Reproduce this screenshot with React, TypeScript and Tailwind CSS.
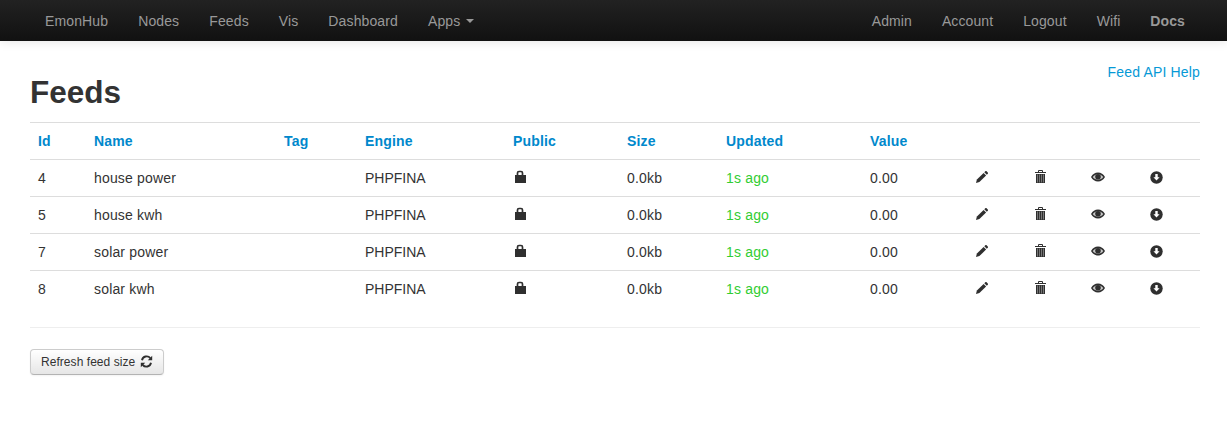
const leftNav = ['EmonHub', 'Nodes', 'Feeds', 'Vis', 'Dashboard'];
const rightNav = ['Admin', 'Account', 'Logout', 'Wifi'];
const headers = ['Id', 'Name', 'Tag', 'Engine', 'Public', 'Size', 'Updated', 'Value'];

const feeds = [
  { id: 4, name: 'house power' },
  { id: 5, name: 'house kwh' },
  { id: 7, name: 'solar power' },
  { id: 8, name: 'solar kwh' },
];

function LockIcon() {
  return (
    <svg width="14" height="14" viewBox="0 0 14 14" className="block">
      <path d="M4.500 5V3C4.500 2 5 1.500 6 1.500h2C9 1.500 9.500 2 9.500 3V5" fill="none" stroke="#2f2f2f" strokeWidth="1.700" />
      <rect x="2" y="5" width="11" height="8" fill="#2f2f2f" />
    </svg>
  );
}

function PencilIcon() {
  return (
    <svg width="14" height="14" viewBox="0 0 14 14" className="block">
      <path d="M1 13l.9-3.400 6.700-6.700 2.500 2.500-6.700 6.700z" fill="#2f2f2f" />
      <path d="M9.300 2.200l1-1c.4-.4.9-.4 1.300 0l1.200 1.200c.4.4.4.9 0 1.300l-1 1z" fill="#2f2f2f" />
    </svg>
  );
}

function TrashIcon() {
  return (
    <svg width="12" height="14" viewBox="0 0 12 14" className="block">
      <path d="M3.500 2V0.500h4V2" fill="none" stroke="#2f2f2f" strokeWidth="1" />
      <rect x="0" y="2" width="11" height="1" fill="#2f2f2f" />
      <path d="M1 4h9v9H1z" fill="#2f2f2f" />
      <path d="M2.500 4.500v8M4.500 4.500v8M6.500 4.500v8M8.500 4.500v8" stroke="#8a8a8a" strokeWidth="0.800" />
    </svg>
  );
}

function EyeIcon() {
  return (
    <svg width="14" height="10" viewBox="0 0 14 10" className="block">
      <path d="M0 5c1.600-2.900 4-4.500 7-4.500S12.400 2.100 14 5c-1.600 2.900-4 4.500-7 4.500S1.600 7.900 0 5z" fill="#2f2f2f" />
      <path d="M1.700 5C3 3.300 4.800 2.200 7 2.200S11 3.300 12.300 5C11 6.700 9.200 7.800 7 7.800S3 6.700 1.700 5z" fill="#c8c8c8" />
      <circle cx="7" cy="4.800" r="2.800" fill="#2f2f2f" />
    </svg>
  );
}

function DownloadIcon() {
  return (
    <svg width="13" height="13" viewBox="0 0 13 13" className="block">
      <circle cx="6.500" cy="6.500" r="6.200" fill="#2f2f2f" />
      <path d="M5.300 3h2.400v3.200h1.900L6.500 9.600 3.400 6.200h1.900z" fill="#fff" />
    </svg>
  );
}

function RefreshIcon() {
  return (
    <svg width="13" height="13" viewBox="0 0 13 13" className="block">
      <path d="M2 5.200A4.700 4.700 0 0 1 10.300 3.200" fill="none" stroke="#2f2f2f" strokeWidth="1.900" />
      <path d="M12.200 0.800v4.400H7.800z" fill="#2f2f2f" />
      <path d="M11 7.800A4.700 4.700 0 0 1 2.700 9.800" fill="none" stroke="#2f2f2f" strokeWidth="1.900" />
      <path d="M0.800 12.200V7.800h4.400z" fill="#2f2f2f" />
    </svg>
  );
}

function NavLink({ label, bold }: { label: string; bold?: boolean }) {
  return <a className={bold ? 'px-[15px] font-bold text-[#999]' : 'px-[15px] text-[#999]'}>{label}</a>;
}

export default function App() {
  return (
    <div className="min-h-[427px] bg-white font-['Liberation_Sans',sans-serif] text-[14px] leading-5 tracking-[0.17px] text-[#333]">
      <nav className="flex h-[41px] items-center justify-between bg-gradient-to-b from-[#222222] to-[#111111] pl-[30px] pr-[27px] tracking-[0.1px] shadow-[0_1px_10px_rgba(0,0,0,0.1)]">
        <div className="flex items-center tracking-[0.125px]">
          {leftNav.map((item) => (
            <NavLink key={item} label={item} />
          ))}
          <a className="flex items-center px-[15px] text-[#999]">
            Apps
            <span className="ml-[6px] mt-[1px] h-0 w-0 border-x-[4px] border-t-[4px] border-x-transparent border-t-[#999]" />
          </a>
        </div>
        <div className="flex items-center">
          {rightNav.map((item) => (
            <NavLink key={item} label={item} />
          ))}
          <NavLink label="Docs" bold />
        </div>
      </nav>

      <main className="ml-[30px] mr-[27px]">
        <div className="flex items-start justify-between pt-[21px]">
          <h2 className="mt-[10px] text-[31.5px] font-bold leading-[40px] tracking-normal text-[#333]">Feeds</h2>
          <a className="text-[#0699d6]">Feed API Help</a>
        </div>

        <table className="mt-[10px] w-full table-fixed border-collapse">
          <colgroup>
            <col className="w-[56px]" />
            <col className="w-[190px]" />
            <col className="w-[81px]" />
            <col className="w-[148px]" />
            <col className="w-[114px]" />
            <col className="w-[99px]" />
            <col className="w-[144px]" />
            <col className="w-[105px]" />
            <col className="w-[59px]" />
            <col className="w-[57px]" />
            <col className="w-[58px]" />
            <col />
          </colgroup>
          <thead>
            <tr className="border-y border-[#ddd]">
              {headers.map((h) => (
                <th key={h} className="h-[37px] p-0 pl-[8px] text-left font-bold text-[#0088cc]">
                  {h}
                </th>
              ))}
              <th colSpan={4} />
            </tr>
          </thead>
          <tbody>
            {feeds.map((feed, i) => (
              <tr key={feed.id} className={i < feeds.length - 1 ? 'border-b border-[#ddd]' : ''}>
                <td className="h-[37px] p-0 pl-[8px]">{feed.id}</td>
                <td className="p-0 pl-[8px]">{feed.name}</td>
                <td className="p-0 pl-[8px]" />
                <td className="p-0 pl-[8px] tracking-normal">PHPFINA</td>
                <td className="p-0 pb-[2px] pl-[8px]"><LockIcon /></td>
                <td className="p-0 pl-[8px]">0.0kb</td>
                <td className="p-0 pl-[8px] text-[#32cd32]">1s ago</td>
                <td className="p-0 pl-[8px]">0.00</td>
                <td className="p-0 pb-[2px] pl-[8px]"><PencilIcon /></td>
                <td className="p-0 pb-[2px] pl-[9px]"><TrashIcon /></td>
                <td className="p-0 pb-[2px] pl-[8px]"><EyeIcon /></td>
                <td className="p-0 pb-[2px] pl-[9px]"><DownloadIcon /></td>
              </tr>
            ))}
          </tbody>
        </table>

        <hr className="mt-[19px] border-t border-[#eee]" />

        <button className="mt-[21px] flex h-[26px] items-center gap-[5px] rounded-[4px] border border-[#cccccc] border-b-[#b3b3b3] bg-gradient-to-b from-white to-[#e6e6e6] px-[10px] text-[12px] tracking-[0.05px] text-[#333] shadow-[inset_0_1px_0_rgba(255,255,255,0.2),0_1px_2px_rgba(0,0,0,0.05)]">
          Refresh feed size
          <RefreshIcon />
        </button>
      </main>
    </div>
  );
}
